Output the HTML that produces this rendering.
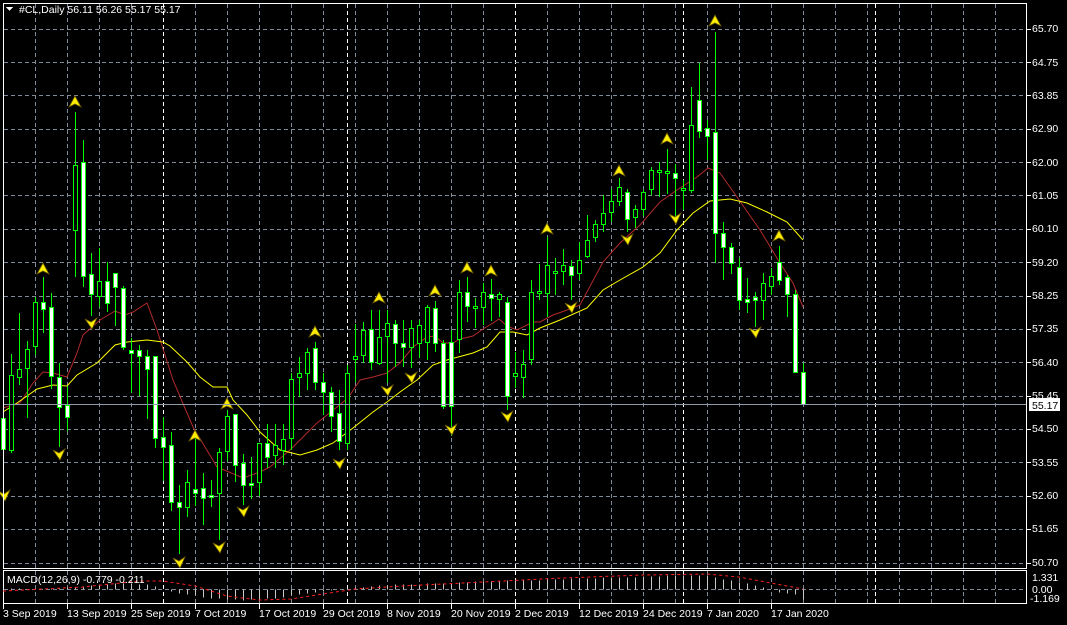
<!DOCTYPE html>
<html><head><meta charset="utf-8">
<style>
html,body{margin:0;padding:0;background:#000;width:1067px;height:625px;overflow:hidden}
svg{display:block}
text{font-family:"Liberation Sans",sans-serif;font-size:10.5px;fill:#fff}
</style></head><body>
<svg id="s" width="1067" height="625" viewBox="0 0 1067 625" xmlns="http://www.w3.org/2000/svg" shape-rendering="crispEdges">
<g id="grid"></g>
<g id="ma"></g>
<g id="candles"></g>
<g id="arrows" shape-rendering="auto"></g>
<line x1="3" y1="404.5" x2="1027" y2="404.5" stroke="#8c9aab" stroke-width="1"/>
<rect x="3.5" y="3.5" width="1023" height="565" fill="none" stroke="#fff"/>
<rect x="3.5" y="570.5" width="1023" height="33" fill="none" stroke="#fff"/>
<g id="macd"></g>
<g id="axis"></g>
<path d="M6 7 L13 7 L9.5 11 Z" fill="#fff"/>
<text x="19" y="13">#CL,Daily  56.11 56.26 55.17 55.17</text>
<text x="7" y="583">MACD(12,26,9) -0.779 -0.211</text>
<text x="1032" y="32">65.70</text><text x="1032" y="66">64.75</text><text x="1032" y="99">63.85</text><text x="1032" y="132">62.90</text>
<text x="1032" y="166">62.00</text><text x="1032" y="199">61.05</text><text x="1032" y="232">60.10</text><text x="1032" y="266">59.20</text>
<text x="1032" y="299">58.25</text><text x="1032" y="332">57.35</text><text x="1032" y="366">56.40</text><text x="1032" y="399">55.45</text>
<text x="1032" y="432">54.50</text><text x="1032" y="466">53.55</text><text x="1032" y="499">52.60</text><text x="1032" y="532">51.65</text>
<text x="1032" y="566">50.70</text>
<rect x="1029" y="398" width="31" height="13" fill="#fff"/>
<text x="1032" y="409" style="fill:#000">55.17</text>
<text x="1032" y="581">1.331</text><text x="1032" y="593">0.00</text><text x="1030" y="602">-1.169</text>
<text x="3" y="617">3 Sep 2019</text><text x="67" y="617">13 Sep 2019</text><text x="131" y="617">25 Sep 2019</text>
<text x="195" y="617">7 Oct 2019</text><text x="259" y="617">17 Oct 2019</text><text x="323" y="617">29 Oct 2019</text>
<text x="387" y="617">8 Nov 2019</text><text x="451" y="617">20 Nov 2019</text><text x="515" y="617">2 Dec 2019</text>
<text x="579" y="617">12 Dec 2019</text><text x="643" y="617">24 Dec 2019</text><text x="707" y="617">7 Jan 2020</text>
<text x="771" y="617">17 Jan 2020</text>
</svg>
<script>
var NS="http://www.w3.org/2000/svg";
function el(p,t,a){var e=document.createElementNS(NS,t);for(var k in a)e.setAttribute(k,a[k]);p.appendChild(e);return e;}
var g=document.getElementById('grid');
for(var x=35;x<1027;x+=32){el(g,'line',{x1:x+.5,y1:4,x2:x+.5,y2:568,stroke:'#7f8a99','stroke-dasharray':'4,3'});el(g,'line',{x1:x+.5,y1:571,x2:x+.5,y2:603,stroke:'#7f8a99','stroke-dasharray':'4,3'});}
[163,347,515,683,875].forEach(function(x){el(g,'line',{x1:x+.5,y1:4,x2:x+.5,y2:568,stroke:'#fff','stroke-dasharray':'4,3'});el(g,'line',{x1:x+.5,y1:571,x2:x+.5,y2:603,stroke:'#fff','stroke-dasharray':'4,3'});});
for(var k=0;k<17;k++){var y=Math.round(28.5+k*33.375)+.5;el(g,'line',{x1:4,y1:y,x2:1026,y2:y,stroke:'#7f8a99','stroke-dasharray':'4,3'});el(g,'line',{x1:1027,y1:y,x2:1031,y2:y,stroke:'#fff'});}
el(g,'line',{x1:4,y1:589.5,x2:1026,y2:589.5,stroke:'#7f8a99','stroke-dasharray':'4,3'});
var ax=document.getElementById('axis');
for(var x=3;x<=771;x+=64){el(ax,'line',{x1:x+.5,y1:604,x2:x+.5,y2:609,stroke:'#fff'});}
var C=[[408,488,418,449,1],[354,453,375,450,0],[313,385,369,377,0],[341,418,349,368,0],[297,355,302,346,0],[277,333,302,309,1],[293,389,307,376,1],[363,447,377,407,1],[386,431,405,417,1],[112,277,165,230,0],
[140,287,162,276,1],[253,316,274,294,1],[248,307,281,296,0],[262,312,281,303,1],[273,326,273,287,1],[286,350,288,347,1],[338,393,350,353,1],[345,396,350,356,1],[350,419,356,369,1],[356,448,356,438,1],
[417,481,437,447,1],[432,511,445,502,1],[485,554,502,507,1],[470,517,482,507,0],[435,506,489,493,1],[473,525,488,498,1],[480,507,495,497,1],[448,540,452,493,0],[410,461,416,451,0],[414,482,414,465,1],
[454,505,463,485,1],[457,499,483,485,1],[443,496,443,482,0],[424,468,443,457,1],[424,468,445,455,0],[424,465,439,450,0],[373,450,379,438,0],[357,397,373,377,0],[348,390,352,373,0],[342,390,348,382,1],
[373,415,382,392,1],[387,432,392,416,1],[390,450,413,441,1],[365,450,373,443,0],[324,382,356,359,0],[322,363,330,355,0],[310,370,329,362,1],[310,365,337,363,0],[310,383,323,336,0],[320,367,324,343,1],
[320,367,343,347,1],[320,368,328,347,0],[320,358,325,343,0],[305,360,307,342,0],[301,352,308,343,1],[340,409,343,406,1],[330,436,342,406,1],[280,353,292,339,0],[277,322,292,306,1],[298,328,306,308,0],
[283,325,292,307,0],[279,321,294,298,1],[292,317,294,299,0],[297,410,302,396,1],[352,388,373,376,0],[350,398,364,377,0],[280,365,292,359,0],[264,300,291,293,0],[237,317,265,293,0],[258,295,271,273,0],
[249,285,265,271,0],[260,300,266,275,1],[242,280,260,273,0],[215,258,240,256,0],[220,242,224,237,0],[195,232,213,224,0],[189,222,201,212,0],[178,206,187,201,0],[189,232,192,219,1],[205,228,209,217,0],
[190,216,192,209,0],[167,195,170,189,0],[162,197,170,172,0],[149,194,171,173,0],[164,217,173,178,1],[180,210,188,190,0],[87,193,125,190,0],[63,138,100,131,1],[120,160,128,136,1],[32,263,132,233,1],
[222,280,233,247,1],[243,274,247,263,1],[258,310,267,300,1],[278,313,299,302,1],[292,327,297,300,1],[273,320,283,300,0],[268,295,276,286,0],[246,285,262,280,1],[275,317,277,294,1],[290,373,294,372,1],[363,404,372,404,1]];
var cg=document.getElementById('candles');
C.forEach(function(c,i){var x=3+8*i;
 el(cg,'line',{x1:x+.5,y1:c[0],x2:x+.5,y2:c[1],stroke:'#00ff00'});
 var h=Math.max(c[3]-c[2],1);
 el(cg,'rect',{x:x-1.5,y:c[2]+.5,width:4,height:h,fill:c[4]?'#fff':'#000',stroke:'#00ff00'});
});
var ma=document.getElementById('ma');
var red="3,408 20,403 33,383 43,372 53,373 67,377 77,353 83,335 100,320 115,311 125,315 133,312 147,303 157,330 173,380 193,427 217,467 243,478 260,472 270,467 290,450 317,423 337,407 348,398 360,380 373,377 387,373 400,363 413,347 427,337 435,336 443,343 453,343 460,339 473,336 483,329 493,323 499,319 507,326 517,330 533,322 540,322 553,315 570,309 580,305 603,262 620,243 640,225 660,202 677,190 697,177 708,168 720,173 737,197 760,230 780,263 793,283 803,307";
var yel="3,412 17,403 37,389 53,385 67,386 77,375 97,363 115,345 127,342 147,340 163,342 170,346 187,362 200,377 213,387 227,387 233,400 247,415 260,432 280,450 300,455 317,450 333,443 353,428 373,412 387,402 400,392 417,380 433,365 447,360 473,353 487,347 500,332 513,332 527,335 540,328 560,320 587,308 603,290 620,280 643,267 660,253 677,230 693,213 710,201 730,199 747,203 767,212 787,222 803,240";
el(ma,'polyline',{points:red,fill:'none',stroke:'#b22a2a','stroke-width':1,'shape-rendering':'auto'});
el(ma,'polyline',{points:yel,fill:'none',stroke:'#ffff00','stroke-width':1,'shape-rendering':'auto'});
var ar=document.getElementById('arrows');
function up(x,y){el(ar,'path',{d:'M'+x+','+(y-6)+' L'+(x+6)+','+(y+5)+' L'+x+','+(y+2)+' L'+(x-6)+','+(y+5)+' Z',fill:'#ffee00',stroke:'#6b5a00','stroke-width':0.8});}
function dn(x,y){el(ar,'path',{d:'M'+(x+1)+','+(y+6)+' L'+(x+6)+','+(y-5)+' L'+x+','+(y-1)+' L'+(x-6)+','+(y-4)+' Z',fill:'#ffee00',stroke:'#6b5a00','stroke-width':0.8});}
[[43,269],[75,102],[227,404],[195,436],[315,332],[379,298],[435,291],[467,268],[491,271],[547,229],[619,171],[667,139],[715,21],[779,236]].forEach(function(p){up(p[0],p[1]);});
[[59,454],[91,323],[179,562],[219,547],[243,511],[339,463],[387,390],[411,377],[451,429],[507,416],[571,307],[627,239],[675,218],[755,332],[4,495]].forEach(function(p){dn(p[0],p[1]);});
function interp(kp,n){var out=[];for(var i=0;i<n;i++){for(var j=0;j<kp.length-1;j++){if(i>=kp[j][0]&&i<=kp[j+1][0]){var t=(i-kp[j][0])/((kp[j+1][0]-kp[j][0])||1);out.push(kp[j][1]+t*(kp[j+1][1]-kp[j][1]));break;}}}return out;}
var H=interp([[0,1],[5,0],[10,3],[14,6],[18,5],[20,0],[22,-4],[26,-9],[30,-11],[34,-9],[38,-4],[42,0],[46,3],[50,5],[56,6],[60,8],[66,9],[72,11],[78,12],[84,14],[88,14],[90,10],[93,6],[95,2],[96,0],[97,-3],[99,-5],[100,-10]],101);
var S=interp([[0,591],[10,587],[17,581],[20,581],[24,586],[28,596],[32,600],[36,599],[40,594],[44,589],[50,586],[60,582],[70,578],[80,575],[88,574],[92,577],[96,583],[100,589]],101);
var mg=document.getElementById('macd');
H.forEach(function(v,i){var x=3+8*i+.5;if(Math.abs(v)<0.6)return;el(mg,'line',{x1:x,y1:589.5,x2:x,y2:(589.5-Math.round(v)),stroke:'#c8c8c8'});});
el(mg,'polyline',{points:S.map(function(v,i){return (3+8*i)+','+v.toFixed(1);}).join(' '),fill:'none',stroke:'#ff2020','stroke-dasharray':'3,3','shape-rendering':'auto'});
</script>
</body></html>
